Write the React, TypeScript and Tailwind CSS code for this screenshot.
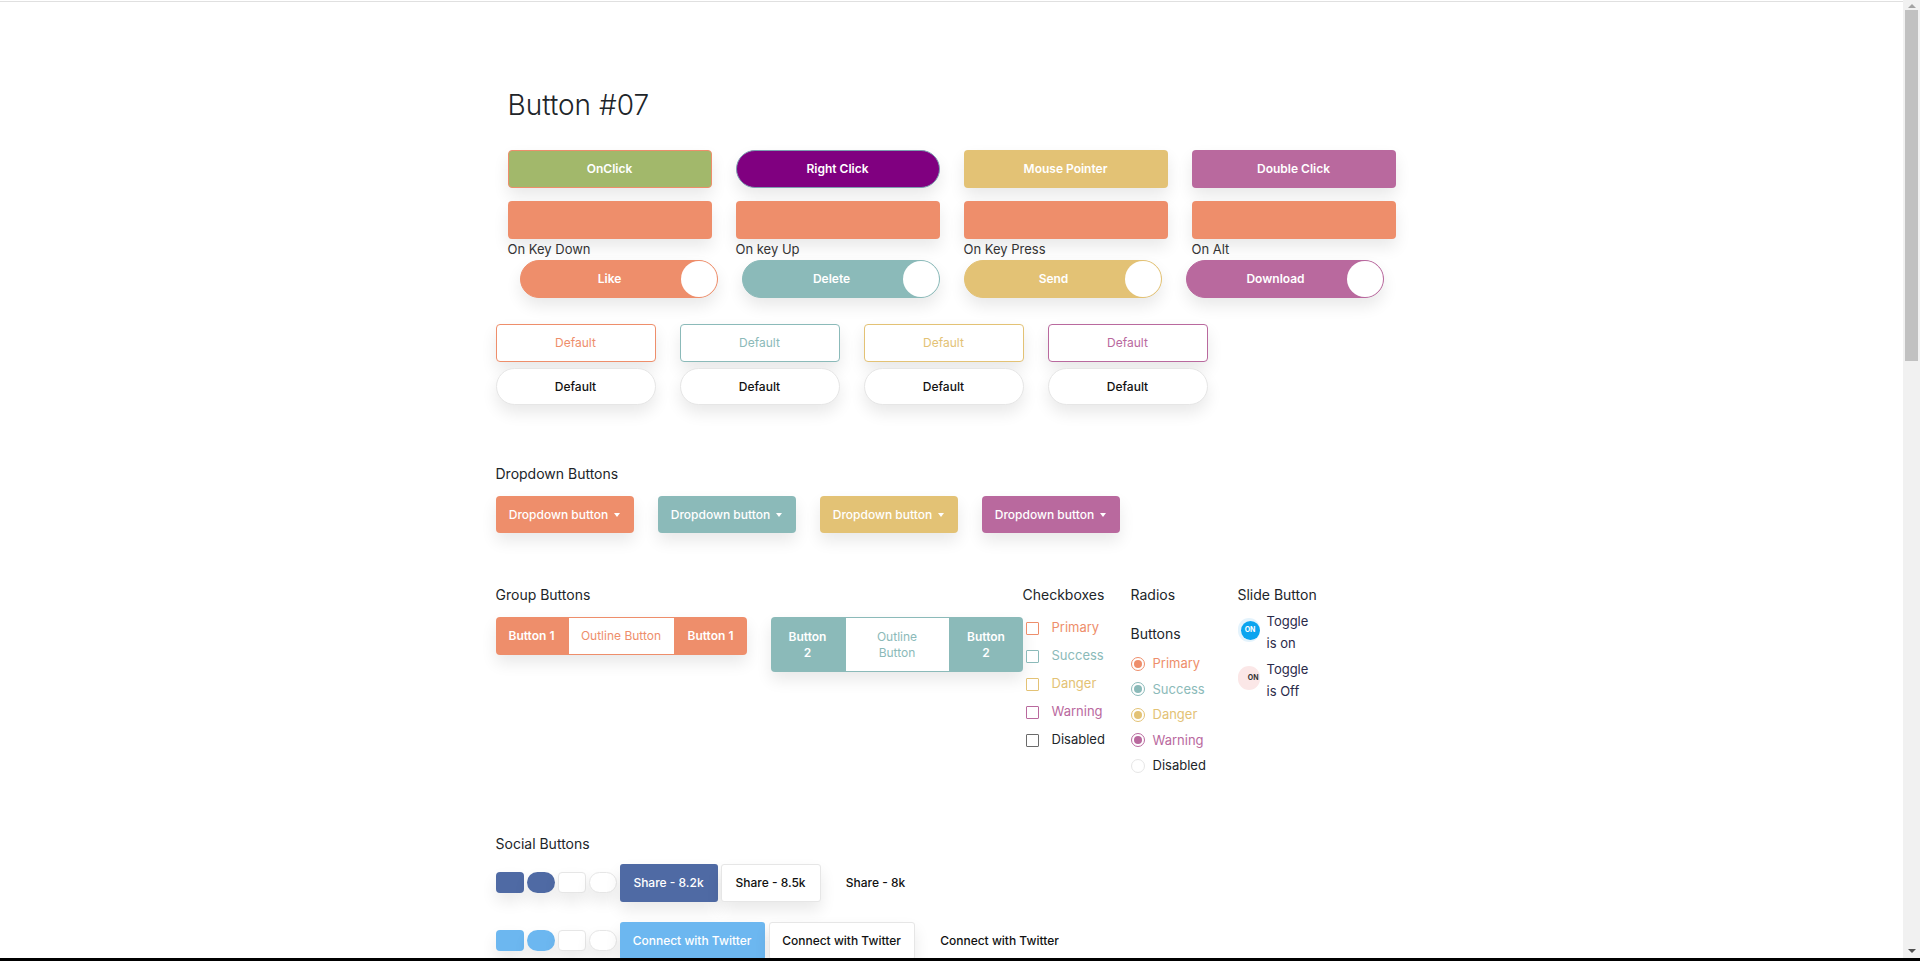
import React from 'react';

const topButtons = [
  { label: 'OnClick', cls: 'bg-[#a2b86b] border border-[#ee8e6b] rounded-[4px]' },
  { label: 'Right Click', cls: 'bg-[#800080] border border-[#7d9db0] rounded-full' },
  { label: 'Mouse Pointer', cls: 'bg-[#e3c275] rounded-[4px]' },
  { label: 'Double Click', cls: 'bg-[#b9699e] rounded-[4px]' },
];

const keyLabels = ['On Key Down', 'On key Up', 'On Key Press', 'On Alt'];

const toggles = [
  { label: 'Like', cls: 'bg-[#ee8e6b] border-[#ee8e6b]' },
  { label: 'Delete', cls: 'bg-[#8bbab9] border-[#8bbab9]' },
  { label: 'Send', cls: 'bg-[#e3c275] border-[#e3c275]' },
  { label: 'Download', cls: 'bg-[#b9699e] border-[#b9699e]' },
];

const outlines = [
  'border-[#ee8e6b] text-[#ee8e6b]',
  'border-[#8bbab9] text-[#8bbab9]',
  'border-[#e3c275] text-[#e3c275]',
  'border-[#b9699e] text-[#b9699e]',
];

const dropdowns = ['bg-[#ee8e6b]', 'bg-[#8bbab9]', 'bg-[#e3c275]', 'bg-[#b9699e]'];

const checks = [
  { label: 'Primary', box: 'border-[#ee8e6b]', text: 'text-[#ee8e6b]' },
  { label: 'Success', box: 'border-[#8bbab9]', text: 'text-[#8bbab9]' },
  { label: 'Danger', box: 'border-[#e3c275]', text: 'text-[#e3c275]' },
  { label: 'Warning', box: 'border-[#b9699e]', text: 'text-[#b9699e]' },
  { label: 'Disabled', box: 'border-[#6b6b6b]', text: 'text-[#212529]' },
];

const radios = [
  { label: 'Primary', ring: 'border-[#ee8e6b]', dot: 'bg-[#ee8e6b]', text: 'text-[#ee8e6b]' },
  { label: 'Success', ring: 'border-[#8bbab9]', dot: 'bg-[#8bbab9]', text: 'text-[#8bbab9]' },
  { label: 'Danger', ring: 'border-[#e3c275]', dot: 'bg-[#e3c275]', text: 'text-[#e3c275]' },
  { label: 'Warning', ring: 'border-[#b9699e]', dot: 'bg-[#b9699e]', text: 'text-[#b9699e]' },
  { label: 'Disabled', ring: 'border-[#e6e6e6]', dot: '', text: 'text-[#212529]' },
];

const shadow = 'shadow-[0_8px_16px_rgba(0,0,0,0.09)]';

const SocialIcons: React.FC<{ color: string }> = ({ color }) => (
  <div className="flex items-center gap-[3px]">
    <div className={`w-[28px] h-[21px] rounded-[4px] ${color} ${shadow}`} />
    <div className={`w-[28px] h-[21px] rounded-full ${color} ${shadow}`} />
    <div className={`w-[28px] h-[21px] rounded-[4px] bg-white border border-[#e6e6e6] ${shadow}`} />
    <div className={`w-[28px] h-[21px] rounded-full bg-white border border-[#e6e6e6] ${shadow}`} />
  </div>
);

// static scrollbar like the one in the captured page
const Scrollbar = () => (
  <div className="fixed right-0 top-0 flex h-[958px] w-[17px] flex-col items-center bg-[#f1f1f1]">
    <span className="mt-[4px] h-0 w-0 border-x-[4px] border-b-[4px] border-x-transparent border-b-[#a3a3a3]" />
    <span className="mt-[2px] h-[351px] w-[13px] bg-[#c1c1c1]" />
    <span className="mt-auto mb-[5px] h-0 w-0 border-x-[4px] border-t-[4px] border-x-transparent border-t-[#505050]" />
  </div>
);

export default function App() {
  return (
    <div className="min-h-screen bg-white pr-[17px] font-['Inter',sans-serif] text-[#212529]">
      <div className="mt-px h-px bg-[#e0e0e0]" />
      <div className="mx-auto w-[912px] pt-[83px] pb-[40px]">
        {/* Button #07 */}
        <h1 className="pl-3 text-[28px] leading-[40px] font-light text-[#212529]">Button #07</h1>

        <div className="mt-[25px] ml-3 flex gap-6">
          {topButtons.map((b) => (
            <button
              key={b.label}
              className={`w-[204px] h-[38px] text-white text-[12px] font-semibold ${b.cls} ${shadow}`}
            >
              {b.label}
            </button>
          ))}
        </div>

        <div className="mt-[13px] ml-3 flex gap-6">
          {keyLabels.map((l) => (
            <div key={l} className="w-[204px]">
              <div className={`h-[38px] rounded-[4px] bg-[#ee8e6b] ${shadow}`} />
              <div className="text-[13px] leading-[20px] text-[#333]">{l}</div>
            </div>
          ))}
        </div>

        <div className="mt-px ml-6 flex gap-6">
          {toggles.map((t) => (
            <button
              key={t.label}
              className={`relative w-[198px] h-[38px] rounded-full border pr-[18px] text-white text-[12px] font-semibold ${t.cls} ${shadow}`}
            >
              {t.label}
              <span className="absolute right-0 top-0 h-[36px] w-[36px] rounded-full bg-white" />
            </button>
          ))}
        </div>

        <div className="mt-[26px] flex gap-6">
          {outlines.map((c, i) => (
            <button key={i} className={`w-[160px] h-[38px] rounded-[4px] border bg-white text-[12px] ${c} ${shadow}`}>
              Default
            </button>
          ))}
        </div>
        <div className="mt-[6px] flex gap-6">
          {outlines.map((_, i) => (
            <button
              key={i}
              className={`w-[160px] h-[37px] rounded-full border border-[#e6e6e6] bg-white text-[12px] font-medium text-[#111] ${shadow}`}
            >
              Default
            </button>
          ))}
        </div>

        {/* Dropdown Buttons */}
        <h6 className="mt-[59px] text-[14px] leading-[20px]">Dropdown Buttons</h6>
        <div className="mt-3 flex gap-6">
          {dropdowns.map((c, i) => (
            <button
              key={i}
              className={`flex w-[138px] h-[37px] items-center justify-center gap-[6px] rounded-[4px] text-white text-[12px] font-medium ${c} ${shadow}`}
            >
              Dropdown button
              <span className="h-0 w-0 border-x-[3.5px] border-t-[4px] border-x-transparent border-t-white" />
            </button>
          ))}
        </div>

        {/* Groups / checkboxes / radios / slide */}
        <div className="mt-[52px] flex">
          <div className="w-[527px]">
            <h6 className="text-[14px] leading-[20px]">Group Buttons</h6>
            <div className="mt-3 flex items-start gap-6">
              <div className={`flex h-[38px] w-[251px] overflow-hidden rounded-[4px] bg-[#ee8e6b] text-[12px] ${shadow}`}>
                <div className="flex w-[72px] items-center justify-center font-semibold text-white">Button 1</div>
                <div className="flex w-[107px] items-center justify-center border border-[#ee8e6b] bg-white text-[#ee8e6b]">
                  Outline Button
                </div>
                <div className="flex w-[72px] items-center justify-center font-semibold text-white">Button 1</div>
              </div>
              <div className={`flex h-[55px] w-[252px] overflow-hidden rounded-[4px] bg-[#8bbab9] text-[12px] leading-[16px] ${shadow}`}>
                <div className="flex w-[74px] items-center justify-center text-center font-semibold text-white">
                  Button<br />2
                </div>
                <div className="flex w-[105px] items-center justify-center border border-[#8bbab9] bg-white text-center text-[#8bbab9]">
                  Outline<br />Button
                </div>
                <div className="flex w-[73px] items-center justify-center text-center font-semibold text-white">
                  Button<br />2
                </div>
              </div>
            </div>
          </div>

          <div className="w-[108px]">
            <h6 className="text-[14px] leading-[20px]">Checkboxes</h6>
            <div className="mt-[9px]">
              {checks.map((c) => (
                <label key={c.label} className="flex h-[28px] items-center gap-[13px] pl-[3px]">
                  <span className={`h-[13px] w-[13px] rounded-[1px] border bg-white ${c.box}`} />
                  <span className={`text-[13px] ${c.text}`}>{c.label}</span>
                </label>
              ))}
            </div>
          </div>

          <div className="w-[107px]">
            <h6 className="text-[14px] leading-[20px]">Radios</h6>
            <h6 className="mt-[19px] text-[14px] leading-[20px]">Buttons</h6>
            <div className="mt-[7px]">
              {radios.map((r) => (
                <label key={r.label} className="flex h-[25.5px] items-center gap-2">
                  <span className={`flex h-[14px] w-[14px] items-center justify-center rounded-full border-[1.5px] bg-white ${r.ring}`}>
                    {r.dot && <span className={`h-[8px] w-[8px] rounded-full ${r.dot}`} />}
                  </span>
                  <span className={`text-[13px] ${r.text}`}>{r.label}</span>
                </label>
              ))}
            </div>
          </div>

          <div>
            <h6 className="text-[14px] leading-[20px]">Slide Button</h6>
            <div className="mt-[5px] flex flex-col gap-1">
              <div className="flex items-start gap-[7px]">
                <span className="mt-[8px] flex h-[24px] w-[22px] items-center justify-end overflow-hidden rounded-full bg-[#e4f3fc]">
                  <span className="flex h-[19px] w-[19px] items-center justify-center rounded-full bg-[#0ba4ef] text-[7px] font-bold text-white">
                    ON
                  </span>
                </span>
                <span className="w-[50px] text-[13px] leading-[22px] text-[#2a2a4a]">Toggle is on</span>
              </div>
              <div className="flex items-start gap-[7px]">
                <span className="mt-[8px] flex h-[24px] w-[22px] items-center justify-end overflow-hidden rounded-full bg-[#fbe7e7] pr-[1px]">
                  <span className="text-[7px] font-bold text-[#333]">ON</span>
                </span>
                <span className="w-[50px] text-[13px] leading-[22px] text-[#2a2a4a]">Toggle is Off</span>
              </div>
            </div>
          </div>
        </div>

        {/* Social Buttons */}
        <h6 className="mt-[55px] text-[14px] leading-[20px]">Social Buttons</h6>
        <div className="mt-[10px] flex items-center gap-[3px]">
          <SocialIcons color="bg-[#4f6aa4]" />
          <button className={`h-[38px] w-[98px] rounded-[3px] bg-[#4f6aa4] text-[12px] font-medium text-white ${shadow}`}>
            Share - 8.2k
          </button>
          <button className={`h-[38px] w-[100px] rounded-[3px] border border-[#e6e6e6] bg-white text-[12px] font-medium text-[#111] ${shadow}`}>
            Share - 8.5k
          </button>
          <button className="h-[38px] w-[104px] text-[12px] font-medium text-[#111]">Share - 8k</button>
        </div>
        <div className="mt-[20px] flex items-start gap-[3px]">
          <div className="mt-[8px]">
            <SocialIcons color="bg-[#6cb7f0]" />
          </div>
          <button className={`h-[38px] w-[145px] rounded-[3px] bg-[#6cb7f0] text-[12px] font-medium text-white ${shadow}`}>
            Connect with Twitter
          </button>
          <button className={`ml-px h-[38px] w-[146px] rounded-[3px] border border-[#e6e6e6] bg-white text-[12px] font-medium text-[#111] ${shadow}`}>
            Connect with Twitter
          </button>
          <button className="h-[38px] w-[164px] text-[12px] font-medium text-[#111]">Connect with Twitter</button>
        </div>
      </div>
      <Scrollbar />
      <div className="fixed bottom-0 left-0 h-[3px] w-full bg-black" />
    </div>
  );
}
